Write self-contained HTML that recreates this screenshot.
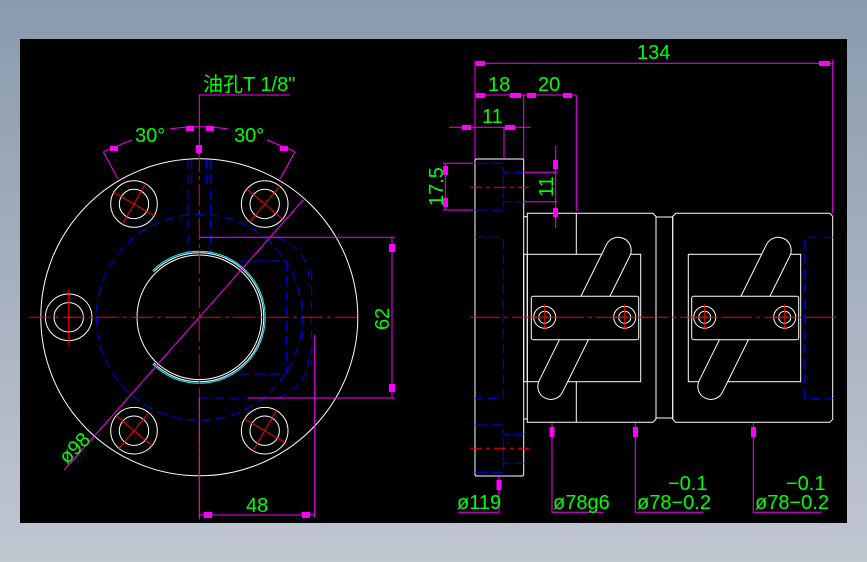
<!DOCTYPE html>
<html><head><meta charset="utf-8"><style>
html,body{margin:0;padding:0;width:867px;height:562px;overflow:hidden;background:linear-gradient(#8a9aad,#c1c7d1);}
svg{position:absolute;left:0;top:0}
text{font-family:"Liberation Sans","Noto Sans CJK SC",sans-serif;fill:#00ff00;font-size:20px}
</style></head><body>
<svg width="867" height="562" viewBox="0 0 867 562">
<defs>
<g id="rc" stroke="#ff0000" fill="none"><line x1="-22" y1="-8" x2="22" y2="8"/><line x1="-8" y1="22" x2="8" y2="-22"/></g>
<g id="hc" stroke="#ff0000" fill="none"><line x1="0" y1="-13" x2="0" y2="13"/><line x1="-13" y1="0" x2="13" y2="0"/></g>
</defs>
<rect x="20" y="39" width="827" height="484" fill="#000"/>
<g fill="none" stroke-width="1">
<g stroke="#0000ff" stroke-dasharray="10 5">
<circle cx="199.3" cy="317.3" r="103"/>
<line x1="188" y1="159" x2="188" y2="255"/><line x1="210.7" y1="159" x2="210.7" y2="255"/>
<line x1="191.7" y1="159" x2="191.7" y2="185"/><line x1="206.7" y1="159" x2="206.7" y2="185"/>
<line x1="199" y1="237.3" x2="277" y2="237.3"/><line x1="199" y1="398" x2="277" y2="398"/>
<line x1="225" y1="261" x2="285" y2="261"/><line x1="225" y1="374" x2="285" y2="374"/>
<line x1="286.7" y1="261" x2="286.7" y2="374"/><line x1="311.7" y1="270" x2="311.7" y2="365"/>
<line x1="302" y1="299" x2="302" y2="340"/>
<path d="M277,237.3 A45,45 0 0 1 309,285"/><path d="M277,398 A45,45 0 0 0 309,350"/>
</g>
<circle cx="199.3" cy="317.3" r="158.5" stroke="#fff"/>
<circle cx="199.3" cy="317.3" r="62.3" stroke="#fff"/>
<path d="M153.7,271.7 A64.5,64.5 0 1 1 153.7,362.9" stroke="#fff"/>
<path d="M152.6,270.6 A66,66 0 1 1 152.6,364" stroke="#00ffff"/>
<g stroke="#fff">
<circle cx="134" cy="204" r="23.3"/><circle cx="134" cy="204" r="14.7"/>
<circle cx="264.7" cy="204" r="23.3"/><circle cx="264.7" cy="204" r="14.7"/>
<circle cx="134" cy="430.7" r="23.3"/><circle cx="134" cy="430.7" r="14.7"/>
<circle cx="264.7" cy="430.7" r="23.3"/><circle cx="264.7" cy="430.7" r="14.7"/>
<circle cx="68.7" cy="317.3" r="23.3"/><circle cx="68.7" cy="317.3" r="14.7"/>
</g>
<g stroke="#ff0000">
<line x1="29" y1="317.3" x2="358" y2="317.3" stroke-dasharray="22 4 4 4"/>
<line x1="199.3" y1="150" x2="199.3" y2="520" stroke-dasharray="22 4 4 4"/>
<use href="#rc" transform="translate(134,204) rotate(10)"/>
<use href="#rc" transform="translate(264.7,204) rotate(-70)"/>
<use href="#rc" transform="translate(134,430.7) rotate(-70)"/>
<use href="#rc" transform="translate(264.7,430.7) rotate(10)"/>
<line x1="68.7" y1="290" x2="68.7" y2="345"/><line x1="64" y1="317.3" x2="73" y2="317.3"/>
</g>
<g stroke="#ff00ff">
<polyline points="289.7,95 199.3,95 199.3,155"/>
<path d="M170,129 A190,190 0 0 1 228,129"/>
<line x1="103.3" y1="151.7" x2="132" y2="140"/><line x1="295" y1="151.7" x2="267" y2="140"/>
<line x1="103.3" y1="151.7" x2="118" y2="179"/><line x1="295" y1="151.7" x2="280" y2="179"/>
<line x1="64.3" y1="470" x2="303" y2="200"/>
<line x1="199.3" y1="237.3" x2="395" y2="237.3"/><line x1="248" y1="398" x2="395" y2="398"/>
<line x1="392" y1="237.3" x2="392" y2="398"/>
<line x1="199.3" y1="515" x2="314.7" y2="515"/><line x1="314.7" y1="335" x2="314.7" y2="518"/>
<line x1="199.3" y1="398" x2="199.3" y2="518"/>
</g>
<g fill="#ff00ff">
<rect x="196" y="145" width="6" height="8"/><rect x="186" y="126" width="8" height="5"/><rect x="206" y="126" width="8" height="5"/>
<rect x="110" y="146" width="8" height="5"/><rect x="280" y="146" width="8" height="5"/>
<rect x="389" y="244" width="6" height="8"/><rect x="389" y="384" width="6" height="8"/>
<rect x="204" y="512" width="8" height="6"/><rect x="302" y="512" width="8" height="6"/>
</g>
<rect x="475" y="159" width="48.7" height="317" stroke="#fff" rx="1.5"/>
<line x1="523.7" y1="216.7" x2="527.3" y2="216.7" stroke="#fff"/><line x1="523.7" y1="419" x2="527.3" y2="419" stroke="#fff"/>
<path d="M527.3,213.3 L653,213.3 L656,216.5 L656,419 L653,422.3 L527.3,422.3 Z" stroke="#fff"/>
<path d="M675.7,213.3 L829.7,213.3 L832.7,216.3 L832.7,419.3 L829.7,422.3 L675.7,422.3 L672.7,419 L672.7,216.5 Z" stroke="#fff"/>
<rect x="656" y="217" width="16.7" height="201" stroke="#fff"/>
<g stroke="#fff">
<line x1="576.3" y1="213.3" x2="576.3" y2="254.3"/><line x1="576.3" y1="381.7" x2="576.3" y2="422.3"/>
<line x1="527.3" y1="254.3" x2="527.3" y2="381.7"/>
<rect x="523.7" y="254.3" width="117" height="127.4"/>
<rect x="688.3" y="254.3" width="112.4" height="127.4"/>
</g>
<path d="M629.95,255.76 L562.35,392.46 A13,13 0 0 1 539.05,380.94 L606.65,244.24 A13,13 0 0 1 629.95,255.76 Z" stroke="#fff" fill="#000"/>
<path d="M789.95,255.76 L722.35,392.46 A13,13 0 0 1 699.05,380.94 L766.65,244.24 A13,13 0 0 1 789.95,255.76 Z" stroke="#fff" fill="#000"/>
<rect x="531.3" y="296.3" width="107.4" height="43.4" rx="2" stroke="#fff" fill="#000"/>
<rect x="691.7" y="296.3" width="107" height="43.4" rx="2" stroke="#fff" fill="#000"/>
<g stroke="#fff">
<circle cx="544.7" cy="317.3" r="11"/><circle cx="544.7" cy="317.3" r="6"/>
<circle cx="624.7" cy="317.3" r="11"/><circle cx="624.7" cy="317.3" r="6"/>
<circle cx="704.7" cy="317.3" r="11"/><circle cx="704.7" cy="317.3" r="6"/>
<circle cx="784.7" cy="317.3" r="11"/><circle cx="784.7" cy="317.3" r="6"/>
</g>
<g stroke="#0000ff">
<polyline points="475,237.3 503.3,237.3 503.3,398.3 475,398.3" stroke-dasharray="10 5"/>
<polyline points="832.7,237.3 804.3,237.3 804.3,398.3 832.7,398.3" stroke-dasharray="10 5"/>
<polyline points="475,163.3 503.3,163.3 503.3,172.3 523.7,172.3" stroke-dasharray="12 4"/>
<polyline points="475,210 503.3,210 503.3,201.7 523.7,201.7" stroke-dasharray="12 4"/>
<polyline points="475,425 503.3,425 503.3,434.3 523.7,434.3" stroke-dasharray="12 4"/>
<polyline points="475,472.3 503.3,472.3 503.3,463.3 523.7,463.3" stroke-dasharray="12 4"/>
<line x1="503.3" y1="176" x2="503.3" y2="198"/><line x1="503.3" y1="438" x2="503.3" y2="460"/>
</g>
<g stroke="#ff0000">
<line x1="470" y1="317.3" x2="838" y2="317.3" stroke-dasharray="30 4 4 4"/>
<line x1="470" y1="187.3" x2="529" y2="187.3" stroke-dasharray="12 4 4 4"/>
<line x1="470" y1="448.3" x2="529" y2="448.3" stroke-dasharray="12 4 4 4"/>
</g>
<use href="#hc" x="544.7" y="317.3"/><use href="#hc" x="624.7" y="317.3"/><use href="#hc" x="704.7" y="317.3"/><use href="#hc" x="784.7" y="317.3"/>
<g stroke="#ff00ff">
<line x1="475" y1="63.3" x2="832.7" y2="63.3"/>
<line x1="475" y1="60" x2="475" y2="159"/><line x1="832.7" y1="60" x2="832.7" y2="213"/>
<line x1="475" y1="95" x2="576.3" y2="95"/>
<line x1="523.7" y1="95" x2="523.7" y2="159"/><line x1="576.3" y1="95" x2="576.3" y2="211"/>
<line x1="449" y1="127.3" x2="530.7" y2="127.3"/><line x1="504" y1="127.3" x2="504" y2="159"/>
<line x1="445.3" y1="163.3" x2="445.3" y2="210"/>
<line x1="443" y1="163.3" x2="473" y2="163.3"/><line x1="443" y1="210" x2="473" y2="210"/>
<line x1="555.7" y1="146" x2="555.7" y2="228"/>
<line x1="523.7" y1="172.3" x2="557" y2="172.3"/><line x1="523.7" y1="201.7" x2="557" y2="201.7"/>
<polyline points="458,512.3 499,512.3 499,476"/>
<polyline points="603,512.3 552,512.3 552,423"/>
<polyline points="703,512.3 635.3,512.3 635.3,423"/>
<polyline points="821,512.3 753.3,512.3 753.3,423"/>
</g>
<g fill="#ff00ff">
<rect x="476" y="61" width="9" height="5"/><rect x="819" y="61" width="11" height="5"/>
<rect x="476" y="93" width="9" height="5"/><rect x="510" y="93" width="11" height="5"/><rect x="527" y="93" width="9" height="5"/><rect x="563" y="93" width="9" height="5"/>
<rect x="462" y="125" width="9" height="5"/><rect x="505" y="125" width="10" height="5"/>
<rect x="443" y="166" width="5" height="9"/><rect x="443" y="198" width="5" height="9"/>
<rect x="553" y="160" width="5" height="9"/><rect x="553" y="208" width="5" height="9"/>
<rect x="496.5" y="480" width="5" height="10"/><rect x="549.5" y="427" width="5" height="10"/>
<rect x="633" y="427" width="5" height="10"/><rect x="751" y="427" width="5" height="10"/>
</g>
</g>
<text x="203" y="91" font-size="17">油孔T 1/8"</text>
<text x="135" y="142" font-size="19">30°</text>
<text x="234" y="142" font-size="19">30°</text>
<text x="246" y="512" font-size="19">48</text>
<text transform="translate(389,330) rotate(-90)" font-size="19">62</text>
<text transform="translate(67,465) rotate(-45)" font-size="19">ø98</text>
<text x="637" y="59" font-size="19">134</text>
<text x="488" y="91" font-size="19">18</text>
<text x="538" y="91" font-size="19">20</text>
<text x="482" y="123" font-size="19">11</text>
<text transform="translate(443,206) rotate(-90)" font-size="19">17.5</text>
<text transform="translate(553,197) rotate(-90)" font-size="19">11</text>
<text x="457" y="509" font-size="18">ø119</text>
<text x="553" y="509" font-size="18">ø78g6</text>
<text x="668" y="490" font-size="18">−0.1</text>
<text x="637" y="509" font-size="18">ø78−0.2</text>
<text x="786" y="490" font-size="18">−0.1</text>
<text x="755" y="509" font-size="18">ø78−0.2</text>
</svg>
</body></html>
